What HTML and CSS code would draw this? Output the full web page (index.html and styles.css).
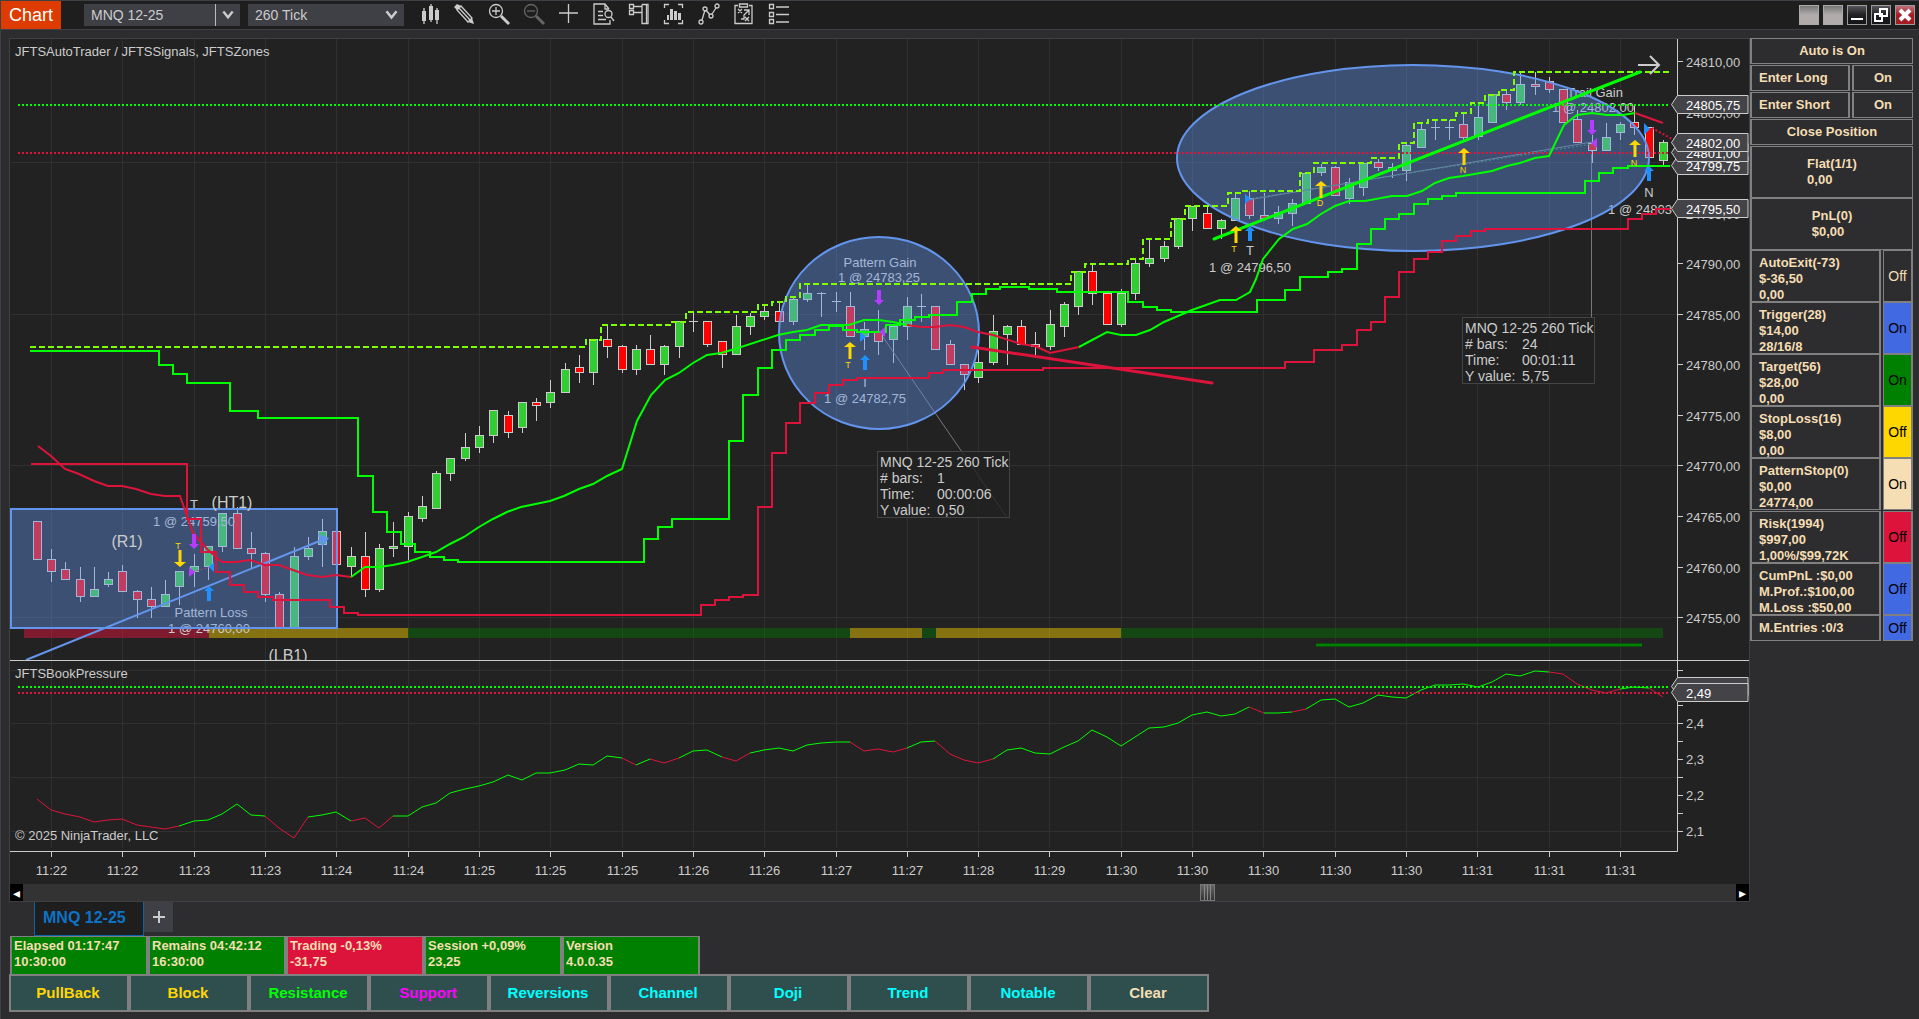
FILE: index.html
```html
<!DOCTYPE html>
<html lang="en">
<head>
<meta charset="utf-8">
<title>Chart - MNQ 12-25</title>
<link rel="stylesheet" href="styles.css">
</head>
<body>
<header class="topbar">
  <span class="topbar-title">Chart</span>
  <label class="picker picker-split">
    <select aria-label="Instrument"><option>MNQ 12-25</option></select>
    <svg class="chevron" viewBox="0 0 12 8"><path d="M2 1l4 5 4-5"/></svg>
  </label>
  <label class="picker">
    <select aria-label="Interval"><option>260 Tick</option></select>
    <svg class="chevron" viewBox="0 0 12 8"><path d="M2 1l4 5 4-5"/></svg>
  </label>
  <nav class="tools" aria-label="Chart tools">
    <button aria-label="Chart style"><svg class="icon" viewBox="0 0 22 22"><path class="solid" d="M1 8h4v10H1zM8 3h4v14H8zM14 7h4v10h-4z"/><path d="M3 5v16M10 1v18M16 5v16"/></svg></button>
    <button aria-label="Drawing tools"><svg class="icon" viewBox="0 0 22 22"><path class="solid" d="M-2 4l3-3 4 2-4 4zM12 19l4-4 2 6z"/><path d="M1 7l4-4 11 12-4 4zM3 5l11 12"/></svg></button>
    <button aria-label="Zoom in"><svg class="icon" viewBox="0 0 22 22"><circle cx="5" cy="8" r="6.5"/><path d="M1 8h8M5 4v8"/><path class="thick" d="M10 13l8 8"/></svg></button>
    <button aria-label="Zoom out" disabled><svg class="icon" viewBox="0 0 22 22"><circle cx="5" cy="8" r="6.5"/><path d="M1 8h8"/><path class="thick" d="M10 13l8 8"/></svg></button>
    <button aria-label="Crosshair"><svg class="icon" viewBox="0 0 22 22"><path d="M-2 10h19M7.500 1v19"/></svg></button>
    <button aria-label="Data box"><svg class="icon" viewBox="0 0 22 22"><path d="M14 17v4H-2V1h11l4 5M9 1v5h4M2 8.500h5M2 12.500h5M2 16.500h8"/><circle cx="12.500" cy="11" r="3.500"/><path d="M15 14l3 4"/></svg></button>
    <button aria-label="Chart trader"><svg class="icon" viewBox="0 0 22 22"><path d="M-1.500 1.500h4v4h-4zM-1.500 7.500h4v4h-4zM3 3.500h8M3 9.500h8M11 1.500h6v19h-6v-8M11 1.500v11"/><path d="M15.500 2v18"/></svg></button>
    <button aria-label="Strategies"><svg class="icon" viewBox="0 0 22 22"><path d="M-1.500 5V1.500H3M12 1.500h4.500V5M-1.500 17v3.500H3M12 20.500h4.500V17"/><path class="solid" d="M1 12h2v5H1zM4 6h3v11H4zM8 8h3v9H8zM12 10h3v7h-3z"/></svg></button>
    <button aria-label="Indicators"><svg class="icon" viewBox="0 0 22 22"><path d="M1 17L4 7M5 7l4 5M11 11l4-6"/><circle cx="0" cy="19" r="2"/><circle cx="4" cy="6" r="2"/><circle cx="10" cy="13" r="2"/><circle cx="16" cy="3" r="2"/></svg></button>
    <button aria-label="Templates"><svg class="icon" viewBox="0 0 22 22"><path d="M2 2.500h-3v18h17v-18h-3M3.500 1h8v3h-8zM8 7h5v5M13 7l-5 5v4H5M2 6l4 4M6 6l-4 4M9 14l4 4M13 14l-4 4"/></svg></button>
    <button aria-label="Properties"><svg class="icon" viewBox="0 0 22 22"><path d="M-1.500 1.500h4v4h-4zM-1.500 9.500h4v4h-4zM-1.500 16.500h4v4h-4z"/><path d="M5 4h13M5 11.500h13M5 19h13"/></svg></button>
  </nav>
  <div class="window-buttons">
    <button class="win pale" aria-label="Link instrument"></button>
    <button class="win pale" aria-label="Link interval"></button>
    <button class="win" aria-label="Minimize"><svg viewBox="0 0 18 18"><path d="M3 13h12"/></svg></button>
    <button class="win" aria-label="Restore"><svg viewBox="0 0 18 18"><path d="M8 3h7v7h-7zM3 8h7v7h-7z"/></svg></button>
    <button class="win close" aria-label="Close"><svg viewBox="0 0 18 18"><path d="M4 4l10 10M14 4L4 14"/></svg></button>
  </div>
</header>

<main class="workspace">
  <section class="chart-column">
    <svg id="chart" class="chart" viewBox="10 39 1739 845" role="img" aria-label="MNQ 12-25 260 Tick chart"></svg>
    <div class="scrollbar">
      <button class="scroll-end" aria-label="Scroll left">◂</button>
      <div class="track"><span class="thumb"></span></div>
      <button class="scroll-end" aria-label="Scroll right">▸</button>
    </div>
    <div class="tabs">
      <button class="tab">MNQ 12-25</button>
      <button class="tab-add" aria-label="Add tab"><svg viewBox="0 0 14 14"><path d="M1 7h12M7 1v12"/></svg></button>
    </div>
    <div class="status">
      <div class="stat">Elapsed 01:17:47<br>10:30:00</div>
      <div class="stat">Remains 04:42:12<br>16:30:00</div>
      <div class="stat loss">Trading -0,13%<br>-31,75</div>
      <div class="stat">Session +0,09%<br>23,25</div>
      <div class="stat">Version<br>4.0.0.35</div>
    </div>
    <div class="signals">
      <button class="gold">PullBack</button>
      <button class="gold">Block</button>
      <button class="lime">Resistance</button>
      <button class="magenta">Support</button>
      <button>Reversions</button>
      <button>Channel</button>
      <button>Doji</button>
      <button>Trend</button>
      <button>Notable</button>
      <button class="wheat">Clear</button>
    </div>
  </section>

  <aside class="panel">
    <button class="cell slim center">Auto is On</button>
    <div class="entry"><button class="cell slim">Enter Long</button><button class="cell slim center">On</button></div>
    <div class="entry"><button class="cell slim">Enter Short</button><button class="cell slim center">On</button></div>
    <button class="cell slim center">Close Position</button>
    <div class="cell tall middle"><p>Flat(1/1)<br>0,00</p></div>
    <div class="cell tall middle"><p>PnL(0)<br>$0,00</p></div>
    <div class="setting"><div class="cell tall">AutoExit(-73)<br>$-36,50<br>0,00</div><button class="toggle">Off</button></div>
    <div class="setting"><div class="cell tall">Trigger(28)<br>$14,00<br>28/16/8</div><button class="toggle blue">On</button></div>
    <div class="setting"><div class="cell tall">Target(56)<br>$28,00<br>0,00</div><button class="toggle green">On</button></div>
    <div class="setting"><div class="cell tall">StopLoss(16)<br>$8,00<br>0,00</div><button class="toggle yellow">Off</button></div>
    <div class="setting group-end"><div class="cell tall">PatternStop(0)<br>$0,00<br>24774,00</div><button class="toggle cream">On</button></div>
    <div class="setting"><div class="cell tall">Risk(1994)<br>$997,00<br>1,00%/$99,72K</div><button class="toggle red">Off</button></div>
    <div class="setting"><div class="cell tall">CumPnL :$0,00<br>M.Prof.:$100,00<br>M.Loss :$50,00</div><button class="toggle blue">Off</button></div>
    <div class="setting"><div class="cell short">M.Entries :0/3</div><button class="toggle blue">Off</button></div>
  </aside>
</main>
<script src="chart.js"></script>
</body>
</html>
```
FILE: styles.css
```css
* { box-sizing: border-box; }
body {
  margin: 0;
  min-height: 100vh;
  background: #2d2d30;
  border-left: 1px solid #3f3f46;
  color: #ccc;
  font-family: "Liberation Sans", Arial, sans-serif;
  font-size: 13px;
}
button, select { font: inherit; color: inherit; margin: 0; border-radius: 0; }
p { margin: 0; }

/* top bar */
.topbar {
  display: flex;
  align-items: center;
  height: 30px;
  padding-right: 4px;
  background: #1e1e1e;
  border-top: 1px solid #3f3f46;
  border-bottom: 1px solid #3f3f46;
}
.topbar-title {
  align-self: stretch;
  width: 60px;
  padding-left: 8px;
  background: #dd3b00;
  color: #fff;
  font-size: 18px;
  line-height: 28px;
}
.picker {
  display: grid;
  grid-template-columns: minmax(0, 1fr) 25px;
  align-items: center;
  justify-items: center;
  width: 156px;
  height: 22px;
  margin-left: 8px;
  background: #3f3f46;
}
.picker-split { margin-left: 23px; }
.picker-split .chevron { border-left: 1px solid #bbb; }
.picker select {
  width: 100%;
  height: 22px;
  padding: 0 0 0 7px;
  appearance: none;
  border: 0;
  background: none;
  font-size: 14px;
}
.chevron { width: 25px; height: 22px; padding: 6px 5px; fill: none; stroke: #ccc; stroke-width: 2; }
.tools { display: flex; align-self: flex-start; margin: 2px 0 0 10px; }
.tools button { width: 35px; height: 22px; padding: 0 7px; border: 0; background: none; color: #ccc; }
.tools button:disabled { color: #666; }
.icon { display: block; width: 22px; height: 22px; overflow: visible; fill: none; stroke: currentColor; stroke-width: 1.3; }
.icon .solid { fill: currentColor; stroke: none; }
.icon .thick { stroke-width: 3; }
.window-buttons { display: flex; gap: 4px; margin-left: auto; }
.win {
  display: block;
  width: 20px;
  height: 20px;
  padding: 0;
  border: 1px solid #9a9a9a;
  background: linear-gradient(#55555a, #202024 50%, #151518);
}
.win svg { display: block; fill: none; stroke: #fff; stroke-width: 2; }
.win.pale { background: linear-gradient(#777, #b2abac 50%); border-color: #aaa; }
.win.close { background: linear-gradient(#c07078, #a51c22 50%); }
.win.close svg { stroke-width: 4; }

/* layout */
.workspace {
  display: grid;
  grid-template-columns: minmax(0, 1fr) 163px;
  padding: 8px 6px 0 8px;
}
.chart { display: block; width: 100%; height: auto; background: #222; border: 1px solid #3f3f46; border-bottom: 0; }
.scrollbar { display: flex; height: 18px; background: #333; border: 1px solid #3f3f46; border-top: 0; }
.scroll-end { width: 13px; height: 17px; padding: 0; border: 0; background: #000; color: #fff; font-size: 14px; line-height: 16px; }
.track { flex: 1; display: flex; justify-content: flex-end; }
.thumb {
  width: 15px;
  margin-right: 30.4%;
  border: 1px solid #777;
  background:
    linear-gradient(90deg, transparent 3px, #888 3px 4px, transparent 4px 6px, #888 6px 7px, transparent 7px 9px, #888 9px 10px, transparent 10px),
    linear-gradient(#666, #333);
}

/* tabs */
.tabs { display: flex; align-items: flex-start; height: 34px; padding-left: 25px; }
.tab {
  width: 110px;
  height: 34px;
  border: 1px solid #0e63a5;
  border-top: 0;
  background: #1e1e1e;
  color: #0e73c5;
  font-size: 16px;
  font-weight: bold;
  padding: 0 0 2px 8px;
  text-align: left;
}
.tab-add { display: grid; place-items: center; width: 29px; height: 30px; border: 0; background: #3f3f46; }
.tab-add svg { width: 14px; fill: none; stroke: #ccc; stroke-width: 2; }

/* session status */
.status { display: grid; grid-template-columns: repeat(5, 138px); padding-left: 1px; }
.stat {
  height: 38px;
  padding: 1px 2px;
  border: 2px solid #808080;
  border-width: 1px 2px 0;
  background: #008000;
  color: #f5deb3;
  font-weight: bold;
  line-height: 16px;
}
.stat.loss { background: #dc143c; }

/* signal buttons */
.signals { display: grid; grid-template-columns: repeat(10, 120px); }
.signals button {
  height: 38px;
  padding: 0 2px 2px 0;
  border: 2px solid #808080;
  background: #2f4f4f;
  color: #00ffff;
  font-size: 15px;
  font-weight: bold;
}
.signals .gold { color: #ffd700; }
.signals .lime { color: #00ff00; }
.signals .magenta { color: #ff00ff; }
.signals .wheat { color: #f5deb3; }

/* trader panel */
.panel { color: #f5deb3; font-weight: bold; line-height: 16px; }
.cell {
  display: block;
  width: 100%;
  padding: 0 7px;
  border: 1px solid #808080;
  border-left-width: 2px;
  background: none;
  text-align: left;
  white-space: nowrap;
}
.slim { height: 26px; margin-bottom: 1px; }
.center { text-align: center; }
.middle.tall { display: grid; place-items: center; padding: 0; }
.tall { height: 52px; padding-top: 4px; }
.short { height: 26px; padding-top: 4px; }
.entry { display: grid; grid-template-columns: 100px 1fr; gap: 2px; }
.entry .cell:first-child, .setting .cell { border-right-width: 2px; }
.setting { display: grid; grid-template-columns: 131px 1fr; gap: 2px; }
.group-end { margin-bottom: 1px; }
.toggle { padding: 0; border: 1px solid #808080; border-right-width: 2px; background: none; font-size: 14px; font-weight: normal; }
.blue, .green, .yellow, .cream, .red { color: #000; }
.blue { background: #4169e1; }
.green { background: #008000; }
.yellow { background: #ffd700; }
.cream { background: #f5deb3; }
.red { background: #dc143c; }

/* chart parts */
.chart text { fill: #ccc; font-size: 13px; }
.chart .note { font-size: 16px; }
.chart .box-text { font-size: 14px; }
.chart .mid { text-anchor: middle; }
.chart .gold-text { fill: #ffd700; font-size: 9px; }
.chart .tag-text { fill: #fff; }
.grid { fill: none; stroke: #303030; }
.axis { fill: none; stroke: #ccc; }
.wick { fill: none; stroke: #ccc; }
.up { fill: #32cd32; stroke: #ccc; }
.down { fill: #ff0000; stroke: #ccc; }
.plot { fill: none; stroke-width: 2; }
.thin { stroke-width: 1; }
.bold { stroke-width: 3; stroke-linecap: round; }
.lime-line { stroke: #00ff00; }
.red-line { stroke: #dc143c; }
.chartreuse-line { stroke: #7fff00; stroke-dasharray: 6 3; }
.dotted { stroke-dasharray: 2 2; }
.shape { fill: #6495ed; fill-opacity: .4; stroke: #6495ed; stroke-width: 2; }
.trend { stroke: #6495ed; stroke-width: 2; }
.trend-head { fill: #6495ed; }
.leader { fill: none; stroke: #777; }
.box { fill: #222; fill-opacity: .8; stroke: #444; }
.mark-gold { fill: #ffd700; }
.mark-blue { fill: #1e90ff; }
.mark-purple { fill: #b53cff; }
.tag { fill: #434348; stroke: #ccc; }
.band-red { fill: #dc143c; opacity: .5; }
.band-gold { fill: #ffd700; opacity: .45; }
.band-green { fill: #008000; opacity: .4; }
.pointer { fill: none; stroke: #ccc; stroke-width: 2; }
```
FILE: chart.js
```js
const svg = document.getElementById('chart');
const parts = [];
const add = s => parts.push(s);
const barX = i => Math.floor(37.3 + 14.265 * i);

// high, open/close top, open/close bottom, low, direction (d = doji)
const bars = `521 521 560 560 r|549 559 572 582 r|562 569 580 580 r|567 579 597 602 r|567 589 597 597 g|572 579 585 587 g|565 571 592 592 r|590 591 600 618 r|587 599 607 618 r|580 594 607 607 g
571 571 587 605 g|554 566 572 587 g|546 546 567 580 g|513 513 547 552 g|507 513 549 549 r|532 548 554 569 r|552 553 595 602 r|592 594 628 628 r|547 556 628 628 g|537 548 557 560 g
519 531 545 567 g|531 531 565 565 r|547 556 567 577 g|532 556 590 597 r|544 548 590 592 g|522 546 549 557 g|512 516 547 560 g|496 506 519 522 g|471 473 509 509 g|458 458 474 481 g
433 447 459 461 g|426 435 448 453 g|410 410 436 443 g|411 415 433 438 r|402 402 428 433 g|398 402 406 421 r|380 392 403 408 g|363 369 393 393 g|355 367 373 383 r|339 339 373 385 g
325 339 347 358 r|345 346 370 373 r|345 349 370 375 g|335 349 365 365 r|345 346 365 375 g|321 321 347 358 g|313 321 321 332 d|321 321 345 347 r|341 341 355 368 r|315 326 355 355 g
313 316 327 335 g|306 311 317 320 g|303 311 322 322 r|297 299 322 325 g|284 293 300 302 g|292 293 293 317 d|292 301 301 312 d|292 306 337 337 r|322 329 337 350 g|310 332 342 355 r
325 326 340 363 g|297 306 327 340 g|294 306 306 322 d|306 306 350 350 r|340 344 365 365 r|364 364 375 390 r|350 362 378 383 g|315 331 363 365 g|325 326 335 365 g|320 326 345 345 r
332 344 347 355 r|310 324 347 350 g|302 304 327 337 g|271 271 307 315 g|265 271 294 305 r|293 293 325 325 r|289 293 325 327 g|260 263 294 300 g|240 258 264 267 g|241 246 259 262 g
218 218 247 249 g|206 206 219 231 g|206 213 229 229 r|219 220 229 239 g|193 198 221 221 g|191 198 216 219 r|193 215 219 221 r|206 212 219 224 g|199 203 214 226 g|173 173 204 204 g
164 167 173 176 g|166 167 196 196 r|178 182 199 204 g|163 163 188 196 g|159 162 168 171 r|163 167 171 178 r|143 145 171 181 g|123 129 148 148 g|120 127 127 140 d|120 127 127 140 d
114 124 138 140 r|102 117 137 140 g|94 94 123 123 g|89 94 103 110 r|72 84 103 105 g|72 84 87 95 r|77 81 90 93 r|89 89 123 123 r|110 119 143 143 r|135 143 151 163 r
123 137 151 151 g|122 124 133 140 g|106 122 128 135 r|127 127 158 158 r|140 142 161 165 g`.split(/[|\n]/).map(b => b.split(' '));

// grid
for (let k = 0; k < 23; k++) {
  const x = Math.floor(51.5 + 71.32 * k) + 0.5;
  add(`<path class="grid" d="M${x} 39V660M${x} 661V848"/>`);
}
[162, 314, 465, 617, 670, 723, 777, 831].forEach(y => add(`<path class="grid" d="M11 ${y + 0.5}H1677"/>`));

// session bands
[['red', 24, 209], ['gold', 209, 408], ['green', 408, 850], ['gold', 850, 922], ['green', 922, 936], ['gold', 936, 1121], ['green', 1121, 1663]]
  .forEach(([c, a, b]) => add(`<rect class="band-${c}" x="${a}" y="628" width="${b - a}" height="10"/>`));
add('<rect x="1316" y="643" width="326" height="4" fill="#0b4d0b"/><rect x="1316" y="644" width="326" height="2" fill="#008000"/>');

// candles
bars.forEach(([h, t, b, l, c], i) => {
  const x = barX(i) + 0.5;
  if (c === 'd') {
    add(`<path class="wick" d="M${x} ${h}V${l}M${x - 4.5} ${+t + 0.5}h9"/>`);
  } else {
    add(`<path class="wick" d="M${x} ${h}V${l}"/><rect class="${c === 'g' ? 'up' : 'down'}" x="${x - 4}" y="${+t + 0.5}" width="8" height="${b - t - 1}"/>`);
  }
});

const label = (s, x, y, cls = 'mid') => add(`<text class="${cls}" x="${x}" y="${y}">${s}</text>`);

// trade captions
[['T', 194, 509], ['1 @ 24759,50', 194, 526], ['Pattern Loss', 211, 617], ['1 @ 24760,00', 209, 633],
 ['Pattern Gain', 880, 267], ['1 @ 24783,25', 879, 282], ['T', 865, 387], ['1 @ 24782,75', 865, 403],
 ['T', 1250, 255], ['1 @ 24796,50', 1250, 272], ['Trail Gain', 1595, 97], ['1 @ 24802,00', 1593, 112],
 ['N', 1649, 197]].forEach(a => label(...a));
add('<clipPath id="plot-area"><path d="M10 39H1672V660H10z"/></clipPath>');
add('<g clip-path="url(#plot-area)"><text class="mid" x="1649" y="214">1 @ 24803,00</text><text class="note mid" x="288" y="661">(LB1)</text></g>');

// trade links
add('<path class="leader" d="M1248 200L1592 142"/><path class="plot thin dotted" stroke="#2e8b57" d="M1248 199L1592 144"/>');
add('<path class="plot thin dotted red-line" d="M193 572L210 567"/>');
add('<path class="leader" d="M883 337L1006 516M1591.500 151V317"/>');

// highlighted zones
add('<rect class="shape" x="11" y="509" width="326" height="119"/>');
add('<ellipse class="shape" cx="879" cy="333" rx="100" ry="96"/>');
add('<ellipse class="shape" cx="1413" cy="158" rx="236" ry="93"/>');
label('(R1)', 127, 547, 'note mid');
label('(HT1)', 232, 508, 'note mid');
add('<path class="trend" d="M26 660L322 540"/><path class="trend-head" d="M318 534L329 538L322 547z"/>');

// price levels
add('<path class="plot lime-line dotted" d="M18 105H1668"/><path class="plot red-line dotted" d="M18 153H1668"/>');
add('<path class="plot red-line dotted" d="M1652 128L1672 139"/>');

// stepped plots: start x, then "y until x" pairs
const steps = (x0, s) => {
  let d = `M${x0}`;
  s.split(' ').forEach((p, i) => { const [y, x] = p.split(':'); d += i ? `V${y}H${x}` : ` ${y}H${x}`; });
  return d;
};
const stepPlot = (cls, x0, s) => add(`<path class="plot ${cls}" d="${steps(x0, s)}"/>`);
stepPlot('chartreuse-line', 30, '347:586 340:601 325:672 322:686 312:758 305:772 302:786 297:800 284:1071 272:1085 264:1128 259:1143 239:1171 219:1185 206:1228 193:1242 191:1300 173:1314 163:1371 158:1399 143:1414 123:1428 120:1456 113:1471 103:1485 95:1499 90:1514 72:1670');
stepPlot('lime-line', 30, '351:159 365:173 374:187 383:230 411:258 418:330 418:358 476:373 512:387 532:401 544:415 552:430 557:444 560:458 562:644 539:658 527:672 519:729 441:743 395:758 368:772 350:786 340:800 335:815 330:829 326:843 330:857 332:886 325:900 320:915 317:929 315:957 302:972 294:986 289:1000 287:1029 289:1057 292:1128 302:1143 307:1157 310:1171 312:1257 300:1285 290:1300 277:1328 272:1342 269:1357 244:1371 229:1385 219:1399 214:1414 204:1428 199:1442 196:1456 193:1585 181:1599 173:1613 168:1628 166:1670');
stepPlot('red-line', 31, '464:187 519:201 552:216 572:230 585:244 592:258 597:273 600:330 607:344 613:358 615:701 605:715 600:729 597:743 595:758 507:772 453:786 423:800 403:815 393:829 385:843 380:857 378:929 373:943 370:1043 368:1285 362:1314 350:1342 345:1357 330:1371 322:1385 297:1399 272:1414 259:1428 252:1442 241:1456 236:1471 231:1485 229:1628 219:1642 214:1656 209:1670');

// moving average
[['red', '38,446 51,456 65,469 79,474 94,481 108,486 122,486 136,489 151,494 165,496 180,496 193,533 207,549 222,562 236,562 250,560 265,565 279,565 293,570 307,575 322,577 336,575 351,577'],
 ['lime', '351,577 365,567 379,567 393,565 407,562 422,557 436,552 450,544 464,537 479,527 493,519 507,512 521,507 550,501 564,496 579,489 593,484 607,476 622,469 637,421 651,395 665,380 679,373 693,363 707,355 721,353 735,349 778,335 793,332 807,330 821,325 849,325 864,320 879,320 893,322 907,325'],
 ['red', '907,325 921,327 935,327 950,325 964,327 978,332 993,335 1021,344 1035,346 1050,353 1079,347'],
 ['lime', '1079,347 1107,332 1121,335 1136,335 1150,330 1164,322 1192,310 1220,300 1236,300 1250,292 1256,279 1263,259 1279,239 1293,229 1307,224 1321,214 1335,206 1349,201 1365,201 1392,196 1407,196 1422,191 1435,183 1449,178 1463,176 1492,171 1507,166 1520,163 1535,158 1549,156 1564,125 1577,115 1592,113 1607,115 1623,115 1635,113'],
 ['red', '1635,113 1663,123']].forEach(([c, p]) => add(`<polyline class="plot ${c}-line" points="${p}"/>`));

// trend lines
add('<path class="plot bold lime-line" d="M1214 239L1640 72"/><path class="plot bold red-line" d="M972 347L1212 383"/>');
add('<path class="pointer" d="M1638 65H1659M1650 56l9 9-9 9"/>');

// arrows
const arrow = (cls, x, tip, dir, w, len, stem) => add(`<path class="mark-${cls}" d="M${x} ${tip}l${w} ${5 * dir}h${stem / 2 - w}v${(len - 5) * dir}h${-stem}v${(5 - len) * dir}h${stem / 2 - w}z"/>`);
arrow('gold', 180, 567, -1, 6, 17, 3);
[[850, 342], [1236, 226], [1321, 181], [1464, 148], [1635, 140]].forEach(([x, y]) => arrow('gold', x, y, 1, 6, 17, 3));
[[209, 586], [865, 355], [1250, 226], [1649, 166]].forEach(([x, y]) => arrow('blue', x, y, 1, 5, 15, 4));
[[194, 549], [879, 305], [1592, 135]].forEach(([x, y]) => arrow('purple', x, y, -1, 5, 15, 4));
[['T', 178, 549], ['T', 848, 368], ['T', 1234, 252], ['D', 1320, 206], ['N', 1463, 173], ['N', 1634, 166]].forEach(a => label(...a, 'gold-text mid'));
add('<path class="mark-purple" d="M189 567l6 5-6 5zM885 327l-6 5 6 5zM1597 138l-6 5 6 5z"/>');
add('<path class="mark-blue" d="M214 562l-5 5 5 5zM860 332l6 5-6 5zM1245 194l6 5-6 5zM1644 123l6 6-6 6z"/>');

// ruler boxes
[[877, 451, 1], [1462, 317, 24]].forEach(([x, y, n]) => {
  add(`<rect class="box" x="${x + 0.5}" y="${y + 0.5}" width="132" height="66"/>`);
  const v = n === 1 ? ['1', '00:00:06', '0,50'] : ['24', '00:01:11', '5,75'];
  label('MNQ 12-25 260 Tick', x + 3, y + 16, 'box-text');
  ['# bars:', 'Time:', 'Y value:'].forEach((s, i) => {
    label(s, x + 3, y + 32 + 16 * i, 'box-text');
    label(v[i], x + 60, y + 32 + 16 * i, 'box-text');
  });
});

// book pressure
const pressure = '799 810 814 817 822 820 819 825 827 829 826 821 820 814 804 815 816 828 838 817 815 812 821 818 828 816 816 807 803 793 789 786 782 775 780 773 773 770 764 765 756 758 765 759 763 758 751 750 757 761 753 750 748 751 745 743 742 742 751 749 752 748 742 741 754 760 763 759 750 748 753 754 747 741 730 737 746 737 728 727 723 715 712 716 714 707 713 713 712 709 700 699 707 703 695 697 698 690 685 685 684 687 682 674 676 671 672 674 684 690 693 689 687 688 697'.split(' ');
const falling = [[0, 10], [16, 19], [22, 25], [41, 42], [43, 45], [48, 50], [57, 61], [63, 67], [85, 86], [88, 89], [106, 111], [113, 114]];
let from = 0;
const run = (a, b, c) => add(`<polyline class="plot thin ${c}-line" points="${pressure.slice(a, b + 1).map((y, i) => `${barX(a + i)},${y}`).join(' ')}"/>`);
falling.forEach(([a, b]) => { if (a > from) run(from, a, 'lime'); run(a, b, 'red'); from = b; });
add('<path class="plot lime-line dotted" d="M18 687H1670"/><path class="plot red-line dotted" d="M18 693H1670"/>');

// axes
add('<path class="axis" d="M10 660.500H1749M10 851.500H1677.500V39"/>');
for (let k = 0; k < 12; k++) {
  const y = Math.floor(61.5 + 50.55 * k);
  add(`<path class="axis" d="M1678 ${y + 0.5}h5"/>`);
  label(`${24810 - 5 * k},00`, 1686, y + 6, '');
}
[670, 687, 705, 723, 741, 759, 777, 795, 813, 831].forEach(y => add(`<path class="axis" d="M1678 ${y + 0.5}h5"/>`));
[['2,4', 728], ['2,3', 764], ['2,2', 800], ['2,1', 836]].forEach(([s, y]) => label(s, 1686, y, ''));
'11:22 11:22 11:23 11:23 11:24 11:24 11:25 11:25 11:25 11:26 11:26 11:27 11:27 11:28 11:29 11:30 11:30 11:30 11:30 11:30 11:31 11:31 11:31'.split(' ').forEach((s, k) => {
  const x = Math.floor(51.5 + 71.32 * k) + 0.5;
  add(`<path class="axis" d="M${x} 852v5"/>`);
  label(s, x, 875);
});

// price tags
[['24799,75', 165], ['24795,50', 208], ['24801,00', 152], ['24802,00', 142], ['24805,75', 104], ['2,50', 686], ['2,49', 692]].forEach(([s, y]) => {
  add(`<path class="tag" d="M1671.500 ${y + 0.5}l6-9h70.500v18h-70.500z"/>`);
  label(s, 1686, y + 6, 'tag-text');
});

// pane titles
label('JFTSAutoTrader / JFTSSignals, JFTSZones', 15, 56, '');
label('JFTSBookPressure', 15, 678, '');
label('© 2025 NinjaTrader, LLC', 15, 840, '');

svg.innerHTML = parts.join('');
```
